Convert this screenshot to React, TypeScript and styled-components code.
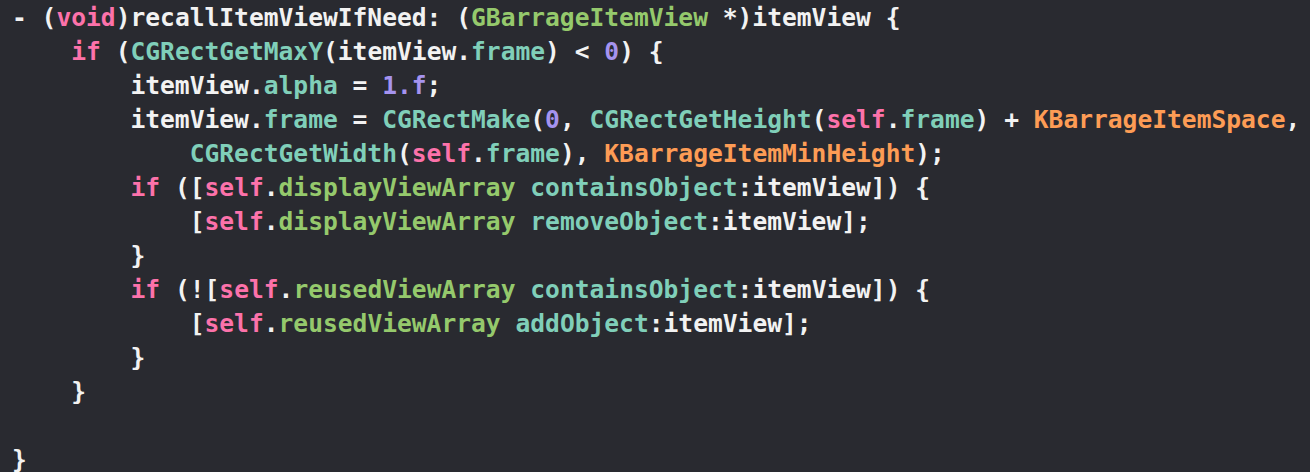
import React from "react";
import styled, { createGlobalStyle } from "styled-components";

const Global = createGlobalStyle`
  html, body { margin: 0; padding: 0; background: #292a30; }
  body { width: 1310px; height: 472px; overflow: hidden; }
`;

type Kind = "p" | "k" | "n" | "t" | "g" | "o";

const colors: Record<Kind, string> = {
  p: "#f2f2f2",
  k: "#fc72aa",
  n: "#a593ef",
  t: "#80cfb9",
  g: "#95c96c",
  o: "#fd9c55",
};

const Editor = styled.pre`
  margin: 0;
  padding: 1px 0 0 12px;
  width: 1310px;
  height: 472px;
  box-sizing: border-box;
  background: #292a30;
  font-family: "DejaVu Sans Mono", "Liberation Mono", monospace;
  font-size: 24.6px;
  font-weight: 600;
  line-height: 34px;
  color: ${colors.p};
  overflow: hidden;
  white-space: pre;
`;

const Line = styled.div`
  display: block;
  height: 34px;
`;

const Tok = styled.span<{ $k: Kind }>`
  color: ${(p) => colors[p.$k]};
`;

type Seg = [Kind, string];

const self: Seg = ["k", "self"];

const lines: Seg[][] = [
  [["p", "- ("], ["k", "void"], ["p", ")recallItemViewIfNeed: ("], ["g", "GBarrageItemView"], ["p", " *)itemView {"]],
  [["p", "    "], ["k", "if"], ["p", " ("], ["t", "CGRectGetMaxY"], ["p", "(itemView."], ["t", "frame"], ["p", ") < "], ["n", "0"], ["p", ") {"]],
  [["p", "        itemView."], ["t", "alpha"], ["p", " = "], ["n", "1.f"], ["p", ";"]],
  [["p", "        itemView."], ["t", "frame"], ["p", " = "], ["t", "CGRectMake"], ["p", "("], ["n", "0"], ["p", ", "], ["t", "CGRectGetHeight"], ["p", "("], self, ["p", "."], ["t", "frame"], ["p", ") + "], ["o", "KBarrageItemSpace"], ["p", ","]],
  [["p", "            "], ["t", "CGRectGetWidth"], ["p", "("], self, ["p", "."], ["t", "frame"], ["p", "), "], ["o", "KBarrageItemMinHeight"], ["p", ");"]],
  [["p", "        "], ["k", "if"], ["p", " (["], self, ["p", "."], ["g", "displayViewArray"], ["p", " "], ["t", "containsObject"], ["p", ":itemView]) {"]],
  [["p", "            ["], self, ["p", "."], ["g", "displayViewArray"], ["p", " "], ["t", "removeObject"], ["p", ":itemView];"]],
  [["p", "        }"]],
  [["p", "        "], ["k", "if"], ["p", " (!["], self, ["p", "."], ["g", "reusedViewArray"], ["p", " "], ["t", "containsObject"], ["p", ":itemView]) {"]],
  [["p", "            ["], self, ["p", "."], ["g", "reusedViewArray"], ["p", " "], ["t", "addObject"], ["p", ":itemView];"]],
  [["p", "        }"]],
  [["p", "    }"]],
  [],
  [["p", "}"]],
];

export default function App() {
  return (
    <>
      <Global />
      <Editor>
        {lines.map((segs, i) => (
          <Line key={i}>
            {segs.map(([k, s], j) => (
              <Tok key={j} $k={k}>
                {s}
              </Tok>
            ))}
          </Line>
        ))}
      </Editor>
    </>
  );
}
